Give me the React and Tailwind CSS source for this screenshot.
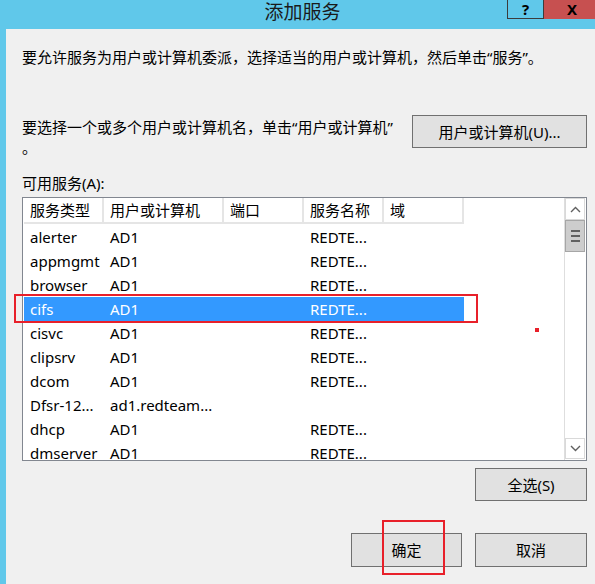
import React from "react";

const rows = [
  ["alerter", "AD1", "REDTE..."],
  ["appmgmt", "AD1", "REDTE..."],
  ["browser", "AD1", "REDTE..."],
  ["cifs", "AD1", "REDTE...", true],
  ["cisvc", "AD1", "REDTE..."],
  ["clipsrv", "AD1", "REDTE..."],
  ["dcom", "AD1", "REDTE..."],
  ["Dfsr-12...", "ad1.redteam...", ""],
  ["dhcp", "AD1", "REDTE..."],
  ["dmserver", "AD1", "REDTE..."],
];

function Btn({ children, className = "" }) {
  return (
    <div
      className={
        "flex items-center justify-center border border-[#707070] bg-[#e1e1e1] text-[15px] leading-[20px] text-black " +
        className
      }
    >
      {children}
    </div>
  );
}

export default function App() {
  return (
    <div
      className="relative flex h-[584px] w-[595px] flex-col overflow-hidden bg-[#60c8ea] text-black"
      style={{ fontFamily: '"Noto Sans", "Noto Sans CJK SC", sans-serif' }}
    >
      {/* title bar */}
      <div className="flex h-[29px] shrink-0 items-start">
        <div className="flex h-[24px] flex-1 items-center justify-center pl-[98px] text-[19px] leading-[24px] text-[#1a1a1a]">
          添加服务
        </div>
        <div className="flex h-[19px] w-[37px] items-center justify-center border-x border-b border-[#3c3c3c] bg-[#60c8ea] text-[15px] font-bold leading-[17px]">
          ?
        </div>
        <div className="flex h-[19px] w-[51px] items-center justify-center bg-[#c75050] pl-[5px] text-[15px] font-bold leading-[17px]">
          X
        </div>
      </div>

      {/* client area */}
      <div className="ml-[6px] flex flex-1 flex-col bg-[#f0f0f0] pl-[16px] pr-[8px]">
        <div className="mt-[18px] text-[15px] leading-[20px]">
          要允许服务为用户或计算机委派，选择适当的用户或计算机，然后单击“服务”。
        </div>

        <div className="mt-[48px] flex items-start justify-between">
          <div className="pt-[2px] text-[15px] leading-[20px]">
            要选择一个或多个用户或计算机名，单击“用户或计算机”
            <br />。
          </div>
          <Btn className="h-[33px] w-[175px]">用户或计算机(U)...</Btn>
        </div>

        <div className="mt-[16px] text-[15px] leading-[20px]">可用服务(A):</div>

        {/* list */}
        <div className="mt-[4px] flex h-[264px] border border-[#828790] bg-white">
          <div className="flex flex-1 flex-col overflow-hidden pl-px">
            <div className="flex h-[27px] shrink-0 text-[15px]">
              {[
                ["服务类型", "w-[80px]"],
                ["用户或计算机", "w-[120px]"],
                ["端口", "w-[80px]"],
                ["服务名称", "w-[80px]"],
                ["域", "w-[80px]"],
              ].map(([t, w]) => (
                <div
                  key={t}
                  className={
                    w +
                    " flex h-[26px] items-center border-b-2 border-r-2 border-[#e5e5e5] px-[6px] leading-[20px]"
                  }
                >
                  {t}
                </div>
              ))}
            </div>
            {rows.map(([a, b, c, sel]) => (
              <div
                key={a}
                className={
                  "flex h-[24px] w-[440px] shrink-0 items-center text-[15px] leading-[20px] " +
                  (sel ? "bg-[#3399ff] text-white" : "")
                }
              >
                <div className="w-[80px] whitespace-nowrap px-[6px]">{a}</div>
                <div className="w-[120px] whitespace-nowrap px-[6px]">{b}</div>
                <div className="w-[80px] px-[6px]"></div>
                <div className="w-[80px] whitespace-nowrap px-[6px]">{c}</div>
                <div className="w-[80px] px-[6px]"></div>
              </div>
            ))}
          </div>

          {/* scrollbar */}
          <div className="flex w-[22px] flex-col border-l border-[#dedede] bg-white pr-px">
            <div className="flex h-[22px] items-center justify-center border border-[#d9d9d9]">
              <svg width="11" height="7" viewBox="0 0 11 7">
                <path d="M1 6 L5.5 1.5 L10 6" fill="none" stroke="#606060" strokeWidth="1.4" />
              </svg>
            </div>
            <div className="flex h-[32px] flex-col items-center justify-center gap-[3px] border border-[#a6a6a6] bg-[#cdcdcd]">
              <div className="h-[2px] w-[9px] bg-[#606060]" />
              <div className="h-[2px] w-[9px] bg-[#606060]" />
              <div className="h-[2px] w-[9px] bg-[#606060]" />
            </div>
            <div className="flex-1" />
            <div className="mb-px flex h-[21px] items-center justify-center border border-[#d9d9d9]">
              <svg width="11" height="7" viewBox="0 0 11 7">
                <path d="M1 1 L5.5 5.5 L10 1" fill="none" stroke="#606060" strokeWidth="1.4" />
              </svg>
            </div>
          </div>
        </div>

        <div className="mt-[7px] flex justify-end">
          <Btn className="h-[33px] w-[112px]">全选(S)</Btn>
        </div>

        <div className="mt-[32px] flex justify-end gap-[13px]">
          <Btn className="h-[34px] w-[111px]">确定</Btn>
          <Btn className="h-[34px] w-[112px]">取消</Btn>
        </div>
      </div>

      {/* red annotations */}
      <div className="pointer-events-none absolute left-[14px] top-[294px] h-[29px] w-[464px] border-2 border-[#e8202a]" />
      <div className="pointer-events-none absolute left-[382px] top-[520px] h-[55px] w-[63px] border-2 border-[#e8202a]" />
      <div className="pointer-events-none absolute left-[535px] top-[328px] h-[4px] w-[4px] bg-[#e8202a]" />
    </div>
  );
}
